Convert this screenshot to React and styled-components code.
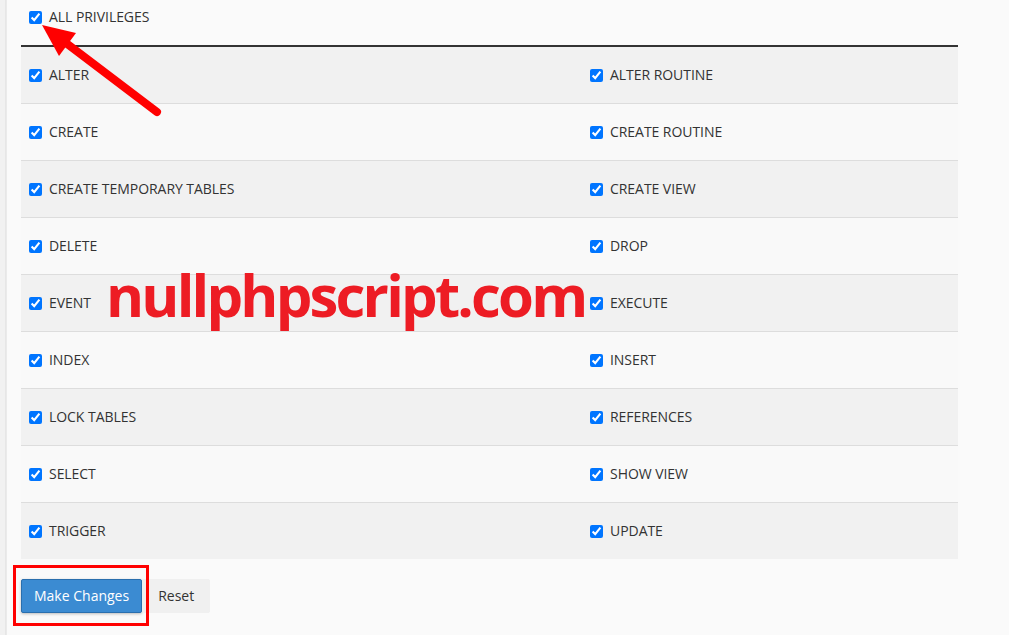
import React from "react";
import styled, { createGlobalStyle } from "styled-components";

const Global = createGlobalStyle`
  html, body { margin: 0; padding: 0; background: #fafafa; }
  body { font-family: "Open Sans", "Liberation Sans", sans-serif; color: #333; font-size: 14px; }
`;

const Page = styled.div`
  display: flex;
  min-height: 635px;
  width: 1009px;
  overflow: hidden;
`;

const Edge = styled.div`
  width: 7px;
  flex: none;
  background: linear-gradient(to right, #f1f1f1 0, #f1f1f1 5px, #e4e4e4 5px, #ececec 7px);
`;

const Main = styled.div`
  position: relative;
  flex: 1;
  padding-left: 14px;
`;

const Content = styled.div`
  width: 937px;
`;

const HeaderRow = styled.div`
  display: flex;
  align-items: center;
  height: 45px;
  padding: 0 8px;
  box-sizing: border-box;
  padding-bottom: 11px;
`;

const Table = styled.div`
  border-top: 2px solid #333;
`;

const Row = styled.div`
  display: grid;
  grid-template-columns: 561px 1fr;
  height: 56px;
  background: ${(p) => (p.$odd ? "#f1f1f1" : "#f9f9f9")};
  border-top: ${(p) => (p.$first ? "none" : "1px solid #dddddd")};
`;

const Cell = styled.label`
  display: flex;
  align-items: center;
  padding: 0 8px;
`;

const Check = styled.input.attrs({ type: "checkbox", defaultChecked: true })`
  width: 13px;
  height: 13px;
  margin: 0 7px 0 0;
  flex: none;
`;

const Label = styled.span`
  font-size: 14px;
  line-height: 20px;
  letter-spacing: -0.05px;
  color: #333;
`;

const Actions = styled.div`
  position: relative;
  display: flex;
  margin-top: 20px;
`;

const Button = styled.button`
  height: 34px;
  padding: 0 ${(p) => (p.$primary ? "12px" : "15px")} 1px;
  font-family: "Open Sans", "Liberation Sans", sans-serif;
  font-size: 14px;
  border-radius: 2px;
  cursor: pointer;
  border: 1px solid ${(p) => (p.$primary ? "#2a6fae" : "#f0f0f0")};
  background: ${(p) => (p.$primary ? "#3b8bd2" : "#f0f0f0")};
  color: ${(p) => (p.$primary ? "#ffffff" : "#333333")};
  box-shadow: ${(p) => (p.$primary ? "0 1px 3px rgba(0,0,0,0.25)" : "none")};
`;

const Highlight = styled.div`
  position: absolute;
  left: -8px;
  top: -14px;
  width: 136px;
  height: 61px;
  box-sizing: border-box;
  border: 3px solid #ff0000;
  pointer-events: none;
`;

const Watermark = styled.div`
  position: absolute;
  left: 99px;
  top: 260px;
  font-family: "Open Sans", "Liberation Sans", sans-serif;
  font-weight: 700;
  font-size: 58px;
  letter-spacing: -2.8px;
  line-height: 70px;
  color: #ed1c24;
  pointer-events: none;
  white-space: nowrap;
`;

const Arrow = styled.svg`
  position: absolute;
  left: -7px;
  top: 0;
  pointer-events: none;
`;

const rows = [
  ["ALTER", "ALTER ROUTINE"],
  ["CREATE", "CREATE ROUTINE"],
  ["CREATE TEMPORARY TABLES", "CREATE VIEW"],
  ["DELETE", "DROP"],
  ["EVENT", "EXECUTE"],
  ["INDEX", "INSERT"],
  ["LOCK TABLES", "REFERENCES"],
  ["SELECT", "SHOW VIEW"],
  ["TRIGGER", "UPDATE"],
];

export default function App() {
  return (
    <>
      <Global />
      <Page>
        <Edge />
        <Main>
          <Content>
            <HeaderRow>
              <Check />
              <Label>ALL PRIVILEGES</Label>
            </HeaderRow>
            <Table>
              {rows.map(([a, b], i) => (
                <Row key={a} $odd={i % 2 === 0} $first={i === 0}>
                  <Cell>
                    <Check />
                    <Label>{a}</Label>
                  </Cell>
                  <Cell>
                    <Check />
                    <Label>{b}</Label>
                  </Cell>
                </Row>
              ))}
            </Table>
            <Actions>
              <Button $primary>Make Changes</Button>
              <Button>Reset</Button>
              <Highlight />
            </Actions>
          </Content>
          <Watermark>nullphpscript.com</Watermark>
          <Arrow width="200" height="130" viewBox="0 0 200 130">
            <line x1="157" y1="112" x2="66" y2="43" stroke="#ff0000" strokeWidth="8" strokeLinecap="round" />
            <polygon points="42,25 76,33 59,56" fill="#ff0000" />
          </Arrow>
        </Main>
      </Page>
    </>
  );
}
